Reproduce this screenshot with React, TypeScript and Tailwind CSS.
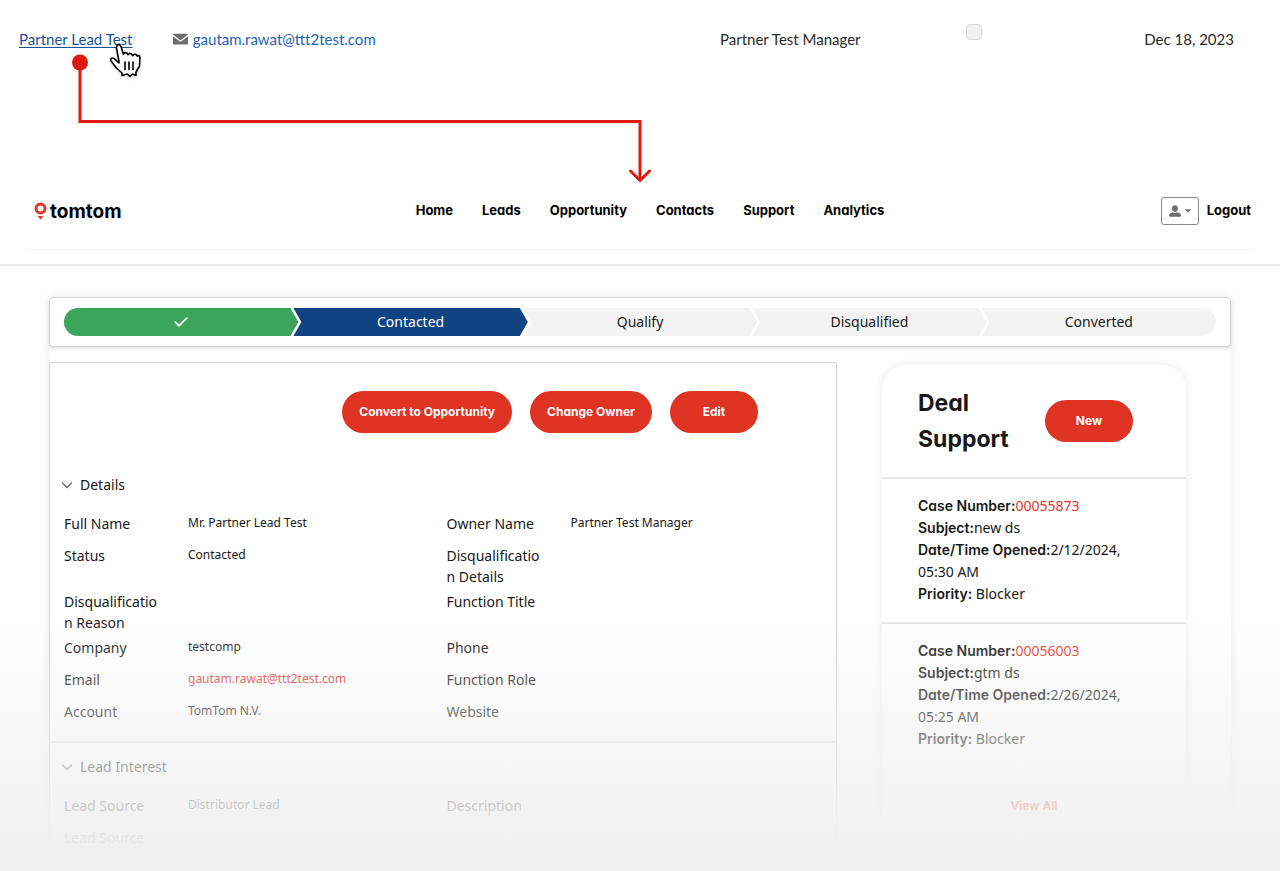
import type { ReactNode } from "react";

const gilroy = "font-['Inter','Noto_Sans',sans-serif] [font-feature-settings:'cv11']";

const navItems = ["Home", "Leads", "Opportunity", "Contacts", "Support", "Analytics"];

function PillButton({ children, className = "" }: { children: ReactNode; className?: string }) {
  return (
    <button
      type="button"
      className={`h-[42px] rounded-full bg-[#df3323] text-xs font-bold text-white ${gilroy} ${className}`}
    >
      {children}
    </button>
  );
}

function RecordRow() {
  return (
    <table className="w-full table-fixed font-['Lato','Noto_Sans',sans-serif] text-[15px] leading-5 text-[#2b2826]">
      <colgroup>
        <col className="w-[13.5%]" />
        <col className="w-[42.75%]" />
        <col className="w-[19.25%]" />
        <col className="w-[13.9%]" />
        <col />
      </colgroup>
      <tbody>
        <tr className="h-20 align-top">
          <td className="pl-[19px] pt-[29px]">
            <a href="#lead" className="text-[#1b5297] underline underline-offset-2">
              Partner Lead Test
            </a>
          </td>
          <td className="pt-[29px]">
            <a href="mailto:gautam.rawat@ttt2test.com" className="flex items-center gap-[5px] text-[#1f62b5]">
              <svg width="15" height="12" viewBox="0 0 15 12" aria-hidden="true">
                <path d="M0 1.200Q0 .7 .5 .7H14.500Q15 .7 15 1.200V1.600L7.500 7.400L0 1.600Z" fill="#706e6b" />
                <path d="M0 3.200L6.900 8.600Q7.500 9 8.100 8.600L15 3.200V11Q15 11.500 14.500 11.500H.5Q0 11.500 0 11Z" fill="#706e6b" />
              </svg>
              gautam.rawat@ttt2test.com
            </a>
          </td>
          <td className="pt-[29px]">Partner Test Manager</td>
          <td className="pt-6">
            <input
              type="checkbox"
              disabled
              aria-label="Converted"
              className="block size-4 appearance-none rounded-[4px] border border-[#d8d8d8] bg-[#f2f2f2]"
            />
          </td>
          <td className="pt-[29px]">Dec 18, 2023</td>
        </tr>
      </tbody>
    </table>
  );
}

function Connector() {
  return (
    <svg
      className="pointer-events-none absolute left-[70px] top-[44px]"
      width="584"
      height="142"
      viewBox="0 0 584 142"
      fill="none"
      aria-hidden="true"
    >
      <circle cx="10" cy="18.500" r="8" fill="#e0190f" />
      <path d="M10 18V77.500H570V136" stroke="#e0190f" strokeWidth="3" />
      <path d="M560.500 127L570 136.500L579.500 127" stroke="#e0190f" strokeWidth="3" strokeLinecap="round" />
      <g transform="translate(40 -1)" stroke="#000" strokeWidth="1.600" strokeLinejoin="round" strokeLinecap="round">
        <path
          className="drop-shadow-sm"
          fill="#fff"
          d="M12 32.500V30L6 24.500L1.500 18.600C-.5 15.800 2 14 4.500 15.800L9 20V18.500L6.500 5C6.300 1.200 10 .4 11 3.500L13.500 11.500C14.500 8.800 17 9 18 11.800C19.500 9.600 21.500 10 22.600 12.700C24 10.500 26.500 10.800 27.300 13.300C28 11.800 30 12.500 29.900 14.500L29.500 23L26 29V32.500L22.500 31L20 33.500L17.500 31Z"
        />
        <path d="M15 19V26.500M19 19V26.500M23 19V26.500" />
      </g>
    </svg>
  );
}

function Header() {
  return (
    <header className="border-b-2 border-[#ececec] px-[27px] pt-[117px]">
      <div className="grid grid-cols-[1fr_auto_1fr] items-center border-b border-[#efefef] pb-6">
        <a href="#home" className={`flex items-center gap-[3px] pl-[7px] text-[19px] leading-6 font-bold text-black ${gilroy}`}>
          <svg width="13" height="18" viewBox="0 0 13 18" aria-hidden="true">
            <circle cx="6.500" cy="6.500" r="4.500" fill="none" stroke="#e8382a" strokeWidth="3" />
            <path d="M3.200 13.400Q6.500 14.600 9.800 13.400L6.500 17.800Z" fill="#e8382a" />
          </svg>
          <span className="pt-[2px]">tomtom</span>
        </a>
        <nav className={`ml-5 flex gap-[29px] self-start text-[13px] leading-[26px] font-bold text-black ${gilroy}`}>
          {navItems.map((item) => (
            <a key={item} href={`#${item.toLowerCase()}`}>
              {item}
            </a>
          ))}
        </nav>
        <div className="flex items-center justify-end gap-2 pr-[2px]">
          <button
            type="button"
            aria-label="Profile menu"
            className="flex h-7 w-[38px] items-center justify-center gap-1 rounded-[3px] border border-[#8a8886]"
          >
            <svg width="12" height="12" viewBox="0 0 12 12" fill="#706e6b" aria-hidden="true">
              <ellipse cx="6" cy="3.500" rx="2.900" ry="3.300" />
              <path d="M0 10.600C0 8.400 2 7.800 4 7.200Q6 8.600 8 7.200C10 7.800 12 8.400 12 10.600Q12 11.800 11 11.800H1Q0 11.800 0 10.600Z" />
            </svg>
            <svg width="6" height="4" viewBox="0 0 6 4" fill="#706e6b" aria-hidden="true">
              <path d="M0 .3H6L3 3.800Z" />
            </svg>
          </button>
          <a href="#logout" className={`text-[13px] font-bold text-black ${gilroy}`}>
            Logout
          </a>
        </div>
      </div>
      <div className="h-[14px]" />
    </header>
  );
}

const step = "flex h-7 flex-1 items-center justify-center";
const middle =
  "-ml-[5px] pb-0.5 [clip-path:polygon(0_0,calc(100%_-_8px)_0,100%_50%,calc(100%_-_8px)_100%,0_100%,8px_50%)]";

function SalesPath() {
  return (
    <ol className="flex rounded border border-[#d4d4d4] bg-white px-[14px] py-[10px] text-[14px] text-[#181818] shadow-[0_2px_3px_rgba(0,0,0,0.1)]">
      <li
        className={`${step} rounded-l-full bg-[#3ba55b] [clip-path:polygon(0_0,calc(100%_-_8px)_0,100%_50%,calc(100%_-_8px)_100%,0_100%)]`}
      >
        <svg width="14" height="10" viewBox="0 0 14 10" fill="none" aria-label="Completed">
          <path d="M1.200 5L5 8.700L12.800 1.200" stroke="#fff" strokeWidth="1.700" strokeLinecap="round" />
        </svg>
      </li>
      <li className={`${step} ${middle} bg-[#104382] text-white`}>Contacted</li>
      <li className={`${step} ${middle} bg-[#f3f3f3]`}>Qualify</li>
      <li className={`${step} ${middle} bg-[#f3f3f3]`}>Disqualified</li>
      <li
        className={`${step} -ml-[5px] rounded-r-full bg-[#f3f3f3] pb-0.5 [clip-path:polygon(0_0,100%_0,100%_100%,0_100%,8px_50%)]`}
      >
        Converted
      </li>
    </ol>
  );
}

type Field = { label: string; value?: ReactNode };

const details: Field[] = [
  { label: "Full Name", value: "Mr. Partner Lead Test" },
  { label: "Owner Name", value: "Partner Test Manager" },
  { label: "Status", value: "Contacted" },
  { label: "Disqualification Details" },
  { label: "Disqualification Reason" },
  { label: "Function Title" },
  { label: "Company", value: "testcomp" },
  { label: "Phone" },
  {
    label: "Email",
    value: (
      <a href="mailto:gautam.rawat@ttt2test.com" className="text-[#e5392c]">
        gautam.rawat@ttt2test.com
      </a>
    ),
  },
  { label: "Function Role" },
  { label: "Account", value: "TomTom N.V." },
  { label: "Website" },
];

const leadInterest: Field[] = [
  { label: "Lead Source", value: "Distributor Lead" },
  { label: "Description" },
  { label: "Lead Source" },
];

function FieldSection({ title, fields }: { title: string; fields: Field[] }) {
  return (
    <section>
      <h2>
        <button type="button" aria-expanded="true" className="flex items-center gap-[7px] pl-[11px] text-[14px] leading-6">
          <svg width="12" height="7" viewBox="0 0 12 7" fill="none" aria-hidden="true">
            <path d="M1.500 1L6 5.500L10.500 1" stroke="#706e6b" strokeWidth="1.400" strokeLinecap="round" />
          </svg>
          {title}
        </button>
      </h2>
      <dl className="mt-4 grid grid-cols-2 pl-[14px] pr-[7px]">
        {fields.map((field, index) => (
          <div key={index} className="flex min-h-8 gap-7 pb-1">
            <dt className="w-24 text-[14px] leading-[21px] break-words">{field.label}</dt>
            <dd className="text-[12px] leading-[19px]">{field.value}</dd>
          </div>
        ))}
      </dl>
    </section>
  );
}

const cases = [
  { number: "00055873", subject: "new ds", date: "2/12/2024,", time: "05:30 AM" },
  { number: "00056003", subject: "gtm ds", date: "2/26/2024,", time: "05:25 AM" },
];

function DealSupport() {
  const term = `inline font-semibold ${gilroy}`;
  return (
    <aside className="mx-[45px] mt-[3px] rounded-3xl bg-white shadow-[0_0_8px_rgba(0,0,0,0.09)]">
      <div className="flex items-center justify-between border-b-2 border-[#e6e6e6] py-5 pr-[53px] pl-9">
        <h2 className={`w-24 text-[23px] leading-9 font-bold ${gilroy}`}>Deal Support</h2>
        <PillButton className="w-[88px]">New</PillButton>
      </div>
      {cases.map((item, index) => (
        <dl
          key={item.number}
          className={`px-9 pt-4 text-[14px] leading-[22px] ${index === 0 ? "border-b-2 border-[#e6e6e6] pb-[17px]" : "pb-[46px]"}`}
        >
          <div>
            <dt className={term}>Case Number:</dt>
            <dd className="inline">
              <a href={`#case-${item.number}`} className="text-[#e5392c]">
                {item.number}
              </a>
            </dd>
          </div>
          <div>
            <dt className={term}>Subject:</dt>
            <dd className="inline">{item.subject}</dd>
          </div>
          <div>
            <dt className={term}>Date/Time Opened:</dt>
            <dd className="contents">
              <span>{item.date}</span> <span className="inline-block">{item.time}</span>
            </dd>
          </div>
          <div>
            <dt className={term}>Priority:</dt> <dd className="inline">Blocker</dd>
          </div>
        </dl>
      ))}
      <a href="#cases" className={`block pb-6 text-center text-xs leading-5 font-semibold text-[#e5392c] ${gilroy}`}>
        View All
      </a>
    </aside>
  );
}

export default function App() {
  return (
    <div className="relative overflow-hidden bg-white font-['Noto_Sans',sans-serif] text-[#181818]">
      <RecordRow />
      <Connector />
      <Header />
      <main className="mx-[49px] mt-[31px] shadow-[0_0_10px_rgba(0,0,0,0.09)]">
        <SalesPath />
        <div className="grid grid-cols-[2fr_1fr] pt-[15px]">
          <div className="rounded-t border border-b-0 border-[#d4d4d4] pt-7">
            <div className="flex justify-end gap-[18px] pr-[78px] pb-10">
              <PillButton className="px-[17px]">Convert to Opportunity</PillButton>
              <PillButton className="px-[17px]">Change Owner</PillButton>
              <PillButton className="w-[88px]">Edit</PillButton>
            </div>
            <FieldSection title="Details" fields={details} />
            <div className="mt-2 mb-3 border-b-2 border-[#e6e6e6]" />
            <FieldSection title="Lead Interest" fields={leadInterest} />
            <div className="h-5" />
          </div>
          <DealSupport />
        </div>
      </main>
      <div className="pointer-events-none absolute inset-x-0 bottom-0 h-[265px] bg-linear-to-b from-[#f0f0f0]/0 to-[#f0f0f0] to-90%" />
    </div>
  );
}
